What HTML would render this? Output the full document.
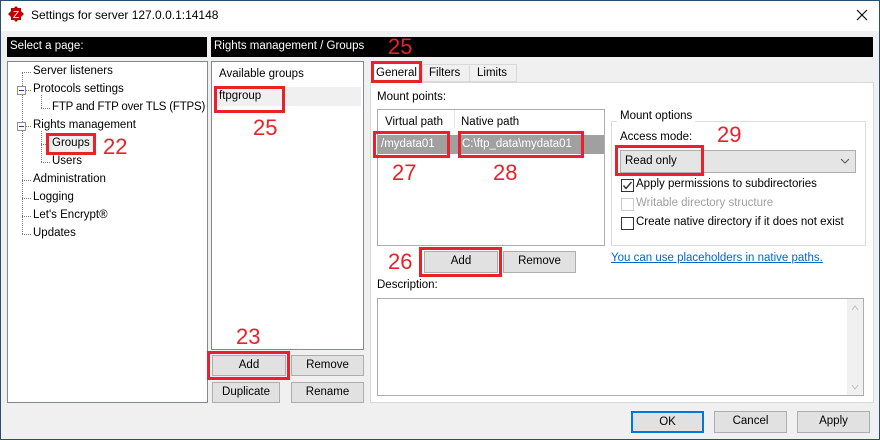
<!DOCTYPE html>
<html><head><meta charset="utf-8"><style>
*{box-sizing:border-box;margin:0;padding:0}
body{width:880px;height:440px;position:relative;overflow:hidden;background:#f0f0f0;font-family:"Liberation Sans",sans-serif;font-size:11.5px;color:#000}
.a{position:absolute;white-space:nowrap}
.btn{position:absolute;background:#e1e1e1;border:1px solid #adadad;text-align:center;line-height:19px}
.red{position:absolute;border:3px solid #e8212a}
.num{position:absolute;color:#e8212a;font-size:22px;line-height:22px}
.box{position:absolute;background:#fff;border:1px solid #828790}
.cb{position:absolute;width:13px;height:13px;border:1px solid #333;background:#fff}
.dot{position:absolute;border-top:1px dotted #777}
.dotv{position:absolute;border-left:1px dotted #777}
.pm{position:absolute;width:9px;height:9px;border:1px solid #919191;background:#fff}
.pm:after{content:"";position:absolute;left:1px;top:3px;width:5px;height:1px;background:#1e3f9c}
</style></head><body>
<div class="a" style="left:0;top:0;width:880px;height:31px;background:#fff;border:1px solid #2b4d6e;border-bottom:none"></div>
<svg class="a" style="left:8px;top:6px" width="16" height="16" viewBox="0 0 16 16"><polygon points="8,0 10,2 13,2 13,5 16,8 13,11 13,14 10,14 8,16 6,14 3,14 3,11 0,8 3,5 3,2 6,2" fill="#bf0000"/><text x="8" y="12" font-size="10" fill="#fff" text-anchor="middle" font-family="Liberation Sans">Z</text></svg>
<div class="a" style="left:31px;top:8px;font-size:12px">Settings for server 127.0.0.1:14148</div>
<svg class="a" style="left:856px;top:9px" width="12" height="12"><path d="M1 1L11 11M11 1L1 11" stroke="#000" stroke-width="1.1"/></svg>
<div class="a" style="left:0;top:31px;width:1px;height:409px;background:#2b4d6e"></div>
<div class="a" style="left:879px;top:31px;width:1px;height:409px;background:#2b4d6e"></div>
<div class="a" style="left:0;top:439px;width:880px;height:1px;background:#2b4d6e"></div>

<div class="a" style="left:7px;top:37px;width:200px;height:20px;background:#000;color:#fff;padding:3px 3px">Select a page:</div>
<div class="a" style="left:211px;top:37px;width:662px;height:20px;background:#000;color:#fff;padding:3px 3px">Rights management / Groups</div>

<div class="box" style="left:7px;top:61px;width:201px;height:342px"></div>
<div class="dotv" style="left:22px;top:72px;height:162px"></div>
<div class="dot" style="left:22px;top:72px;width:9px"></div>
<div class="dot" style="left:22px;top:90px;width:9px"></div>
<div class="dot" style="left:22px;top:126px;width:9px"></div>
<div class="dot" style="left:22px;top:180px;width:9px"></div>
<div class="dot" style="left:22px;top:198px;width:9px"></div>
<div class="dot" style="left:22px;top:216px;width:9px"></div>
<div class="dot" style="left:22px;top:234px;width:9px"></div>
<div class="dotv" style="left:41px;top:95px;height:13px"></div>
<div class="dot" style="left:41px;top:108px;width:9px"></div>
<div class="dotv" style="left:41px;top:131px;height:31px"></div>
<div class="dot" style="left:41px;top:144px;width:9px"></div>
<div class="dot" style="left:41px;top:162px;width:9px"></div>
<div class="pm" style="left:17px;top:86px"></div>
<div class="pm" style="left:17px;top:122px"></div>
<div class="a" style="left:33px;top:65px">Server listeners</div>
<div class="a" style="left:33px;top:83px">Protocols settings</div>
<div class="a" style="left:52px;top:101px;letter-spacing:-0.2px">FTP and FTP over TLS (FTPS)</div>
<div class="a" style="left:33px;top:119px">Rights management</div>
<div class="a" style="left:49px;top:136px;width:44px;height:17px;background:#f0f0f0"></div>
<div class="a" style="left:52px;top:137px">Groups</div>
<div class="red" style="left:46px;top:133px;width:50px;height:22px"></div>
<div class="num" style="left:103px;top:136px">22</div>
<div class="a" style="left:52px;top:155px">Users</div>
<div class="a" style="left:33px;top:173px">Administration</div>
<div class="a" style="left:33px;top:191px">Logging</div>
<div class="a" style="left:33px;top:209px">Let's Encrypt®</div>
<div class="a" style="left:33px;top:227px">Updates</div>

<div class="box" style="left:211px;top:61px;width:153px;height:289px"></div>
<div class="a" style="left:219px;top:68px">Available groups</div>
<div class="a" style="left:215px;top:87px;width:146px;height:19px;background:#f0f0f0"></div>
<div class="a" style="left:219px;top:90px">ftpgroup</div>
<div class="red" style="left:214px;top:86px;width:71px;height:27px"></div>
<div class="num" style="left:253px;top:117px">25</div>
<div class="num" style="left:236px;top:326px">23</div>
<div class="btn" style="left:212px;top:355px;width:74px;height:21px">Add</div>
<div class="red" style="left:207px;top:351px;width:83px;height:29px"></div>
<div class="btn" style="left:291px;top:355px;width:73px;height:21px">Remove</div>
<div class="btn" style="left:212px;top:382px;width:68px;height:21px">Duplicate</div>
<div class="btn" style="left:291px;top:382px;width:73px;height:21px">Rename</div>

<div class="num" style="left:388px;top:36px">25</div>
<div class="a" style="left:370px;top:82px;width:504px;height:321px;background:#fff;border:1px solid #d9d9d9"></div>
<div class="a" style="left:372px;top:63px;width:50px;height:20px;background:#fff;border:1px solid #d9d9d9;border-bottom:none;padding:3px 3px">General</div>
<div class="a" style="left:422px;top:64px;width:48px;height:18px;background:#f0f0f0;border:1px solid #d9d9d9;padding:2px 6px">Filters</div>
<div class="a" style="left:469px;top:64px;width:48px;height:18px;background:#f0f0f0;border:1px solid #d9d9d9;padding:2px 7px">Limits</div>
<div class="red" style="left:371px;top:61px;width:51px;height:22px"></div>
<div class="a" style="left:377px;top:91px">Mount points:</div>
<div class="a" style="left:377px;top:109px;width:228px;height:137px;border:1px solid #adadad;background:#fff"></div>
<div class="a" style="left:454px;top:110px;width:1px;height:18px;background:#e5e5e5"></div>
<div class="a" style="left:385px;top:116px">Virtual path</div>
<div class="a" style="left:461px;top:116px">Native path</div>
<div class="a" style="left:378px;top:135px;width:226px;height:19px;background:#a0a0a0"></div>
<div class="a" style="left:381px;top:138px;color:#fff">/mydata01</div>
<div class="a" style="left:462px;top:138px;color:#fff">C:\ftp_data\mydata01</div>
<div class="red" style="left:373px;top:131px;width:77px;height:27px"></div>
<div class="red" style="left:458px;top:131px;width:126px;height:27px"></div>
<div class="num" style="left:392px;top:162px">27</div>
<div class="num" style="left:493px;top:162px">28</div>

<div class="a" style="left:611px;top:121px;width:255px;height:125px;border:1px solid #dcdcdc"></div>
<div class="a" style="left:617px;top:110px;background:#fff;padding:0 3px">Mount options</div>
<div class="a" style="left:620px;top:131px">Access mode:</div>
<div class="num" style="left:717px;top:124px">29</div>
<div class="a" style="left:620px;top:150px;width:236px;height:23px;background:#e5e5e5;border:1px solid #adadad;padding:4px 4px">Read only</div>
<svg class="a" style="left:840px;top:158px" width="10" height="7"><path d="M1 1L5 5L9 1" stroke="#555" fill="none"/></svg>
<div class="red" style="left:615px;top:145px;width:89px;height:31px"></div>
<div class="cb" style="left:621px;top:179px"></div>
<svg class="a" style="left:622px;top:180px" width="11" height="11"><path d="M1.5 5.5L4 8.5L9.5 2" stroke="#333" stroke-width="1.4" fill="none"/></svg>
<div class="a" style="left:636px;top:178px">Apply permissions to subdirectories</div>
<div class="cb" style="left:621px;top:198px;border-color:#ccc"></div>
<div class="a" style="left:636px;top:197px;color:#a0a0a0">Writable directory structure</div>
<div class="cb" style="left:621px;top:217px"></div>
<div class="a" style="left:636px;top:216px">Create native directory if it does not exist</div>
<div class="a" style="left:611px;top:252px;color:#0066cc;text-decoration:underline">You can use placeholders in native paths.</div>

<div class="num" style="left:388px;top:251px">26</div>
<div class="btn" style="left:424px;top:251px;width:74px;height:22px">Add</div>
<div class="red" style="left:419px;top:247px;width:83px;height:30px"></div>
<div class="btn" style="left:503px;top:251px;width:73px;height:22px">Remove</div>
<div class="a" style="left:377px;top:279px">Description:</div>
<div class="a" style="left:377px;top:298px;width:487px;height:98px;border:1px solid #adadad;background:#fff"></div>
<div class="a" style="left:847px;top:299px;width:16px;height:96px;background:#f0f0f0"></div>
<svg class="a" style="left:851px;top:305px" width="8" height="6"><path d="M1 5L4 1L7 5" stroke="#c0c0c0" fill="none"/></svg>
<svg class="a" style="left:851px;top:384px" width="8" height="6"><path d="M1 1L4 5L7 1" stroke="#c0c0c0" fill="none"/></svg>

<div class="btn" style="left:631px;top:411px;width:73px;height:22px;border:2px solid #0078d7;line-height:18px">OK</div>
<div class="btn" style="left:714px;top:411px;width:73px;height:22px">Cancel</div>
<div class="btn" style="left:797px;top:411px;width:73px;height:22px">Apply</div>
</body></html>
